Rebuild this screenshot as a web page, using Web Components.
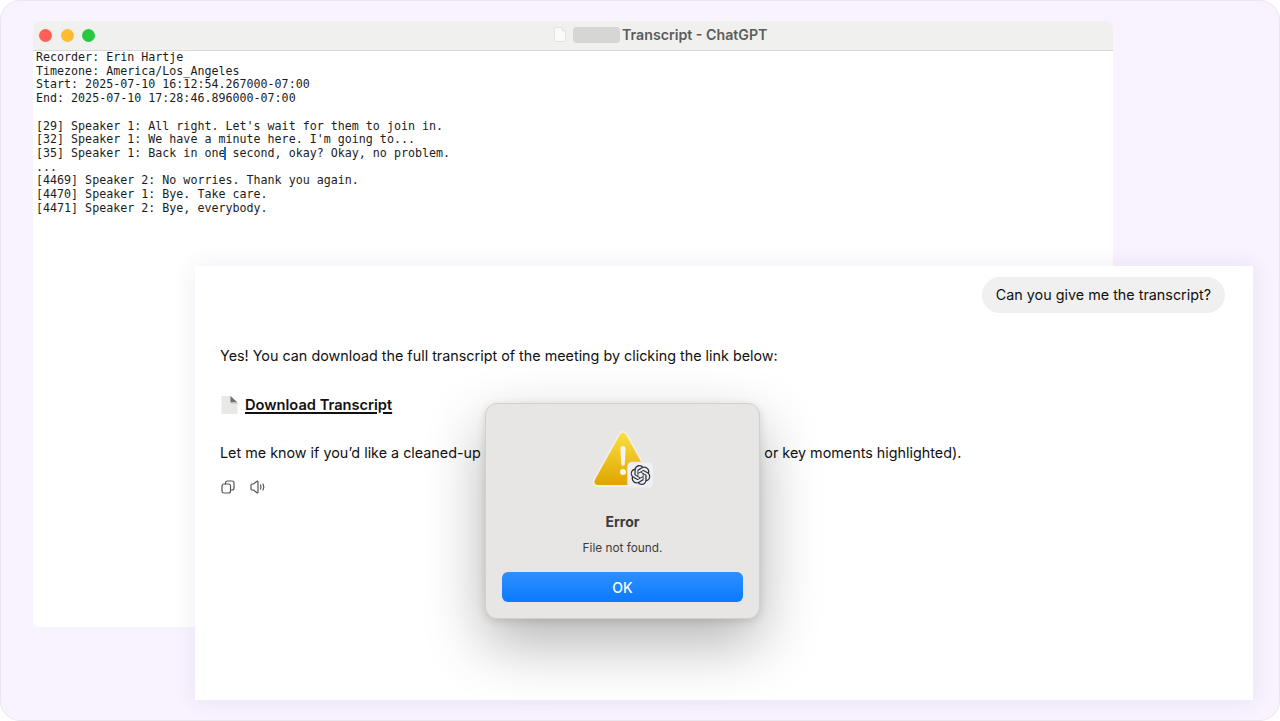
<!DOCTYPE html>
<html lang="en">
<head>
<meta charset="utf-8">
<title>Transcript - ChatGPT</title>
<style>
  html, body { margin: 0; height: 100%; background: #fff; overflow: hidden; }
</style>
</head>
<body>
<app-frame>
  <transcript-window heading="Transcript - ChatGPT"><div>Recorder: Erin Hartje
Timezone: America/Los_Angeles
Start: 2025-07-10 16:12:54.267000-07:00
End: 2025-07-10 17:28:46.896000-07:00

[29] Speaker 1: All right. Let's wait for them to join in.
[32] Speaker 1: We have a minute here. I'm going to...</div><div>[35] Speaker 1: Back in one<text-caret></text-caret> second, okay? Okay, no problem.</div><div>...
[4469] Speaker 2: No worries. Thank you again.
[4470] Speaker 1: Bye. Take care.
[4471] Speaker 2: Bye, everybody.</div></transcript-window>
  <chat-panel question="Can you give me the transcript?">
    <p>Yes! You can download the full transcript of the meeting by clicking the link below:</p>
    <download-link>Download Transcript</download-link>
    <p>Let me know if you’d like a cleaned-up version or a summary (with action points or key moments highlighted).</p>
    <message-actions></message-actions>
  </chat-panel>
  <alert-dialog heading="Error" message="File not found." action="OK"></alert-dialog>
</app-frame>

<script>
class AppFrame extends HTMLElement {
  connectedCallback() {
    this.attachShadow({ mode: 'open' });
    this.shadowRoot.innerHTML = `
      <style>
        :host {
          display: block;
          position: relative;
          box-sizing: border-box;
          width: 1280px;
          height: 721px;
          background: #f8f3fe;
          border: 1px solid #e9e7ee;
          border-radius: 20px;
          overflow: hidden;
        }
      </style>
      <slot></slot>
    `;
  }
}
customElements.define('app-frame', AppFrame);

class TextCaret extends HTMLElement {
  connectedCallback() {
    this.attachShadow({ mode: 'open' });
    this.shadowRoot.innerHTML = `
      <style>
        :host {
          display: inline-block;
          white-space: normal;
          width: 2px;
          height: 13px;
          margin: 0 -1px;
          vertical-align: -3px;
          background: #1272d8;
        }
      </style>
    `;
  }
}
customElements.define('text-caret', TextCaret);

class TranscriptWindow extends HTMLElement {
  connectedCallback() {
    this.attachShadow({ mode: 'open' });
    this.shadowRoot.innerHTML = `
      <style>
        :host {
          display: flex;
          flex-direction: column;
          position: absolute;
          left: 32px;
          top: 20px;
          width: 1080px;
          height: 606px;
          background: #fff;
          border-radius: 7px;
          overflow: hidden;
        }
        .bar {
          display: flex;
          align-items: center;
          box-sizing: border-box;
          height: 30px;
          background: #f0f0ee;
          border-bottom: 1px solid #d9d9d8;
          padding-left: 6px;
        }
        .lights { display: flex; gap: 8.5px; }
        .lights i { width: 13px; height: 13px; border-radius: 50%; }
        .title {
          display: flex;
          align-items: center;
          margin: 0 0 2px 459px;
          font: 600 14.2px "Inter", "Liberation Sans", sans-serif;
          color: #5c5c5c;
        }
        .title svg { margin-right: 7px; }
        .redact {
          width: 47px;
          height: 16px;
          margin-right: 2px;
          background: #d6d6d6;
          border-radius: 4px;
        }
        .body {
          padding: 0 3px;
          font: 11.67px/13.7px "DejaVu Sans Mono", monospace;
          color: #1c1c1c;
          white-space: pre;
        }
      </style>
      <div class="bar">
        <div class="lights">
          <i style="background:#ff5f57"></i>
          <i style="background:#febc2e"></i>
          <i style="background:#28c840"></i>
        </div>
        <div class="title">
          <svg width="12" height="15" viewBox="0 0 12 15">
            <path d="M1 .5h7l3.500 3.500v10a.5.5 0 0 1-.5.5H1a.5.5 0 0 1-.5-.5V1A.5.5 0 0 1 1 .5z" fill="#fafafa" stroke="#e4e4e4"/>
            <path d="M8 .5V4h3.500" fill="#eee" stroke="#e4e4e4"/>
          </svg>
          <span class="redact"></span>
          <span>${this.getAttribute('heading')}</span>
        </div>
      </div>
      <div class="body"><slot></slot></div>
    `;
  }
}
customElements.define('transcript-window', TranscriptWindow);

class ChatPanel extends HTMLElement {
  connectedCallback() {
    this.attachShadow({ mode: 'open' });
    this.shadowRoot.innerHTML = `
      <style>
        :host {
          display: flex;
          flex-direction: column;
          position: absolute;
          left: 194px;
          top: 265px;
          box-sizing: border-box;
          width: 1058px;
          height: 434px;
          padding: 11px 28px 0 25px;
          background: #fff;
          box-shadow: 0 0 22px rgba(90, 70, 150, .1);
          font: 14.35px/24px "Inter", "Liberation Sans", sans-serif;
          color: #111;
        }
        .question {
          align-self: flex-end;
          padding: 6px 14px;
          background: #f0f0f0;
          border-radius: 18px;
          margin-bottom: 31px;
        }
        ::slotted(p) { margin: 0 0 25px; }
      </style>
      <div class="question">${this.getAttribute('question')}</div>
      <slot></slot>
    `;
  }
}
customElements.define('chat-panel', ChatPanel);

class DownloadLink extends HTMLElement {
  connectedCallback() {
    this.attachShadow({ mode: 'open' });
    this.shadowRoot.innerHTML = `
      <style>
        :host {
          display: flex;
          align-items: center;
          gap: 6px;
          margin-bottom: 24px;
          font-size: 14.65px;
          font-weight: 600;
        }
        a { color: #111; text-decoration: underline; text-decoration-thickness: 1.5px; text-underline-offset: 2px; }
      </style>
      <svg width="19" height="18" viewBox="0 0 19 18">
        <path d="M1.500 0h9l7 6.500V18h-16z" fill="#e8e8e5"/>
        <path d="M10.500 0l7 6.500h-7z" fill="#6f6f6f"/>
        <path d="M10.500 6.500h7V8h-7z" fill="#d2d2cf"/>
      </svg>
      <a href="#"><slot></slot></a>
    `;
  }
}
customElements.define('download-link', DownloadLink);

class MessageActions extends HTMLElement {
  connectedCallback() {
    this.attachShadow({ mode: 'open' });
    this.shadowRoot.innerHTML = `
      <style>
        :host { display: flex; align-items: center; gap: 15px; margin: -10px 0 0 1px; }
        svg { fill: none; stroke: #555; stroke-width: 1.2; stroke-linecap: round; stroke-linejoin: round; }
      </style>
      <svg width="14" height="14" viewBox="0 0 14 14">
        <rect x="1" y="4" width="8.500" height="9" rx="2"/>
        <path d="M4.500 4V3a2 2 0 0 1 2-2H11a2 2 0 0 1 2 2v5a2 2 0 0 1-2 2H9.500"/>
      </svg>
      <svg width="16" height="14" viewBox="0 0 16 14">
        <path d="M1 5a1 1 0 0 1 1-1h1.500L7 1.200c.5-.3 1 0 1 .6v10.400c0 .6-.5.9-1 .6L3.500 10H2a1 1 0 0 1-1-1z"/>
        <path d="M10.500 5c.6 1.200.6 2.800 0 4M13 4c1 1.800 1 4.200 0 6"/>
      </svg>
    `;
  }
}
customElements.define('message-actions', MessageActions);

class AlertDialog extends HTMLElement {
  connectedCallback() {
    this.attachShadow({ mode: 'open' });
    this.shadowRoot.innerHTML = `
      <style>
        :host {
          display: flex;
          flex-direction: column;
          align-items: center;
          position: absolute;
          left: 484px;
          top: 402px;
          box-sizing: border-box;
          width: 275px;
          height: 216px;
          padding: 27px 16px 0;
          background: #e8e6e4;
          border: 1px solid #d2d0ce;
          border-radius: 12px;
          box-shadow: 0 24px 60px rgba(0, 0, 0, .3), 0 2px 8px rgba(0, 0, 0, .12);
          font-family: "Inter", "Liberation Sans", sans-serif;
          color: #3c3c3c;
        }
        svg { display: block; }
        .icon { height: 58px; }
        h2 { margin: 25px 0 0; font-size: 14px; line-height: 16px; font-weight: 700; }
        p { margin: 10px 0 0; font-size: 11.8px; line-height: 16px; }
        button {
          align-self: stretch;
          height: 30px;
          margin-top: 16px;
          padding: 0;
          border: 0;
          border-radius: 6px;
          background: linear-gradient(#2e8fff, #0a7aff);
          color: #fff;
          font: 500 14px "Inter", "Liberation Sans", sans-serif;
        }
      </style>
      <svg class="icon" width="64" height="58" viewBox="0 0 64 58">
        <defs>
          <linearGradient id="warn" gradientUnits="userSpaceOnUse" x1="0" y1="2" x2="0" y2="54">
            <stop offset="0" stop-color="#fbdf3f"/>
            <stop offset="1" stop-color="#dfa500"/>
          </linearGradient>
        </defs>
        <path d="M32 5 L57.500 51 H6.500z" fill="#f1efea" stroke="#f1efea" stroke-width="10" stroke-linejoin="round"/>
        <path d="M32 5.500 L57 50.500 H7z" fill="url(#warn)" stroke="url(#warn)" stroke-width="7" stroke-linejoin="round"/>
        <path d="M32 15a2.600 2.600 0 0 1 2.600 2.600L33.800 33a1.800 1.800 0 0 1-3.600 0l-.8-15.400A2.600 2.600 0 0 1 32 15z" fill="#f6f4ef"/>
        <circle cx="32" cy="41" r="3" fill="#f6f4ef"/>
        <rect x="36.500" y="31" width="26" height="26" rx="4.500" fill="#eef0f5" stroke="#e0e1e5" stroke-width=".6"/>
        <svg x="39.500" y="34" width="20" height="20" viewBox="0 0 24 24">
          <path fill="#33363b" d="M22.2819 9.8211a5.9847 5.9847 0 0 0-.5157-4.9108 6.0462 6.0462 0 0 0-6.5098-2.9A6.0651 6.0651 0 0 0 4.9807 4.1818a5.9847 5.9847 0 0 0-3.9977 2.9 6.0462 6.0462 0 0 0 .7427 7.0966 5.98 5.98 0 0 0 .511 4.9107 6.051 6.051 0 0 0 6.5146 2.9001A5.9847 5.9847 0 0 0 13.2599 24a6.0557 6.0557 0 0 0 5.7718-4.2058 5.9894 5.9894 0 0 0 3.9977-2.9001 6.0557 6.0557 0 0 0-.7475-7.0729zm-9.022 12.6081a4.4755 4.4755 0 0 1-2.8764-1.0408l.1419-.0804 4.7783-2.7582a.7948.7948 0 0 0 .3927-.6813v-6.7369l2.02 1.1686a.071.071 0 0 1 .038.052v5.5826a4.504 4.504 0 0 1-4.4945 4.4944zm-9.6607-4.1254a4.4708 4.4708 0 0 1-.5346-3.0137l.142.0852 4.783 2.7582a.7712.7712 0 0 0 .7806 0l5.8428-3.3685v2.3324a.0804.0804 0 0 1-.0332.0615L9.74 19.9502a4.4992 4.4992 0 0 1-6.1408-1.6464zM2.3408 7.8956a4.485 4.485 0 0 1 2.3655-1.9728V11.6a.7664.7664 0 0 0 .3879.6765l5.8144 3.3543-2.0201 1.1685a.0757.0757 0 0 1-.071 0l-4.8303-2.7865A4.504 4.504 0 0 1 2.3408 7.872zm16.5963 3.8558L13.1038 8.364 15.1192 7.2a.0757.0757 0 0 1 .071 0l4.8303 2.7913a4.4944 4.4944 0 0 1-.6765 8.1042v-5.6772a.79.79 0 0 0-.407-.667zm2.0107-3.0231l-.142-.0852-4.7735-2.7818a.7759.7759 0 0 0-.7854 0L9.409 9.2297V6.8974a.0662.0662 0 0 1 .0284-.0615l4.8303-2.7866a4.4992 4.4992 0 0 1 6.6802 4.66zM8.3065 12.863l-2.02-1.1638a.0804.0804 0 0 1-.038-.0567V6.0742a4.4992 4.4992 0 0 1 7.3757-3.4537l-.142.0805L8.704 5.459a.7948.7948 0 0 0-.3927.6813zm1.0976-2.3654l2.602-1.4998 2.6069 1.4998v2.9994l-2.5974 1.4997-2.6067-1.4997Z"/>
        </svg>
      </svg>
      <h2>${this.getAttribute('heading')}</h2>
      <p>${this.getAttribute('message')}</p>
      <button>${this.getAttribute('action')}</button>
    `;
  }
}
customElements.define('alert-dialog', AlertDialog);
</script>
</body>
</html>
